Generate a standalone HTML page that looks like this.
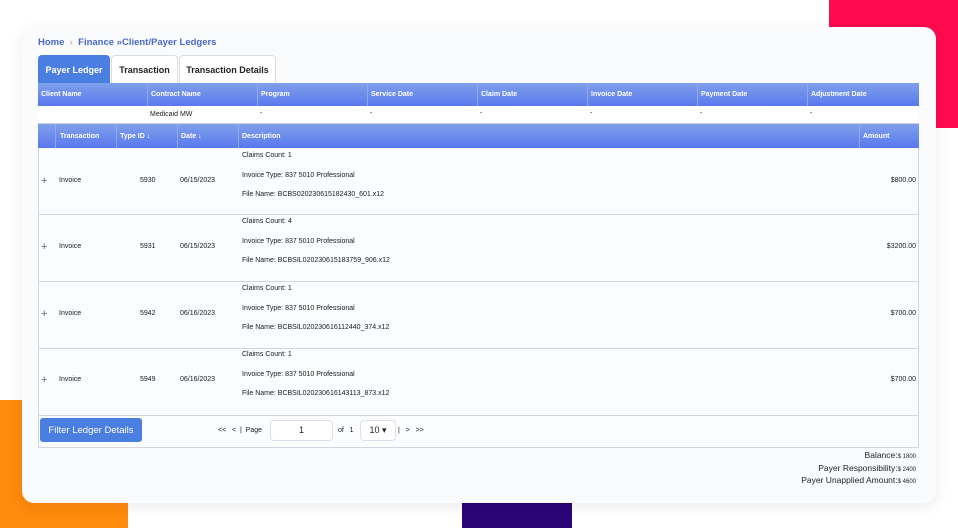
<!DOCTYPE html>
<html><head><style>
*{box-sizing:border-box;margin:0;padding:0}
body{width:958px;height:528px;background:#fff;position:relative;overflow:hidden;font-family:"Liberation Sans",sans-serif;color:#222}
.abs{position:absolute}
.card{left:22px;top:27px;width:914px;height:476px;background:#f9fbfd;border-radius:12px;box-shadow:0 4px 14px rgba(0,0,0,.08)}
.bc{left:38px;top:37px;font-size:9.5px;color:#4a68c8;font-weight:bold}
.tab{top:55px;height:28px;font-size:9px;font-weight:bold;display:flex;align-items:center;justify-content:center;border:1px solid #ddd;border-bottom:none;border-radius:4px 4px 0 0;background:#fff}
.hd{background:linear-gradient(#7fa0ea,#5a78ee);color:#fff;font-size:7px;font-weight:bold}
.hd div{position:absolute;top:0;height:100%;display:flex;align-items:center;padding-left:3px;border-left:1px solid #8fa8ee}
.t{font-size:7px;position:absolute;color:#1a1a1a}
.row{position:absolute;left:38px;width:881px;height:67px;border:1px solid #d3d6dc;border-top:none;background:#fafcfe}
</style></head><body>
<div class="abs" style="left:829px;top:0;width:129px;height:128px;background:#ff0a4f"></div>
<div class="abs" style="left:0;top:400px;width:128px;height:128px;background:#ff8a0c"></div>
<div class="abs" style="left:462px;top:500px;width:110px;height:28px;background:#2a0578"></div>
<div class="abs card"></div>
<div class="abs bc">Home <span style="color:#aaa;font-weight:normal">&nbsp;›&nbsp;</span> Finance »Client/Payer Ledgers</div>
<div class="abs tab" style="left:38px;width:72px;background:#4a7ee0;color:#fff;border-color:#4a7ee0">Payer Ledger</div>
<div class="abs tab" style="left:111px;width:67px">Transaction</div>
<div class="abs tab" style="left:179px;width:97px">Transaction Details</div>
<div class="abs hd" style="left:38px;top:83px;width:881px;height:23px">
<div style="left:0;border:none">Client Name</div><div style="left:109px">Contract Name</div><div style="left:219px">Program</div><div style="left:329px">Service Date</div><div style="left:439px">Claim Date</div><div style="left:549px">Invoice Date</div><div style="left:659px">Payment Date</div><div style="left:769px">Adjustment Date</div></div>
<div class="abs" style="left:38px;top:106px;width:881px;height:18px;background:#fff;border-bottom:1px solid #ccd">
<span class="t" style="left:112px;top:5px">Medicaid MW</span><span class="t" style="left:222px;top:4px">-</span><span class="t" style="left:332px;top:4px">-</span><span class="t" style="left:442px;top:4px">-</span><span class="t" style="left:552px;top:4px">-</span><span class="t" style="left:662px;top:4px">-</span><span class="t" style="left:772px;top:4px">-</span></div>
<div class="abs hd" style="left:38px;top:124px;width:881px;height:24px">
<div style="left:0;border:none"></div><div style="left:17px;padding-left:4px">Transaction</div><div style="left:78px">Type ID ↓</div><div style="left:139px">Date ↓</div><div style="left:200px">Description</div><div style="left:821px">Amount</div></div>
<div class="row" style="top:148px"><span class="t" style="left:2px;top:27px;font-size:11px;color:#666">+</span><span class="t" style="left:20px;top:29px">Invoice</span><span class="t" style="left:101px;top:29px">5930</span><span class="t" style="left:141px;top:29px">06/15/2023</span><span class="t" style="left:203px;top:4px">Claims Count: 1</span><span class="t" style="left:203px;top:24px">Invoice Type: 837 5010 Professional</span><span class="t" style="left:203px;top:43px">File Name: BCBS020230615182430_601.x12</span><span class="t" style="right:2px;top:29px">$800.00</span></div>
<div class="row" style="top:215px"><span class="t" style="left:2px;top:26px;font-size:11px;color:#666">+</span><span class="t" style="left:20px;top:28px">Invoice</span><span class="t" style="left:101px;top:28px">5931</span><span class="t" style="left:141px;top:28px">06/15/2023</span><span class="t" style="left:203px;top:3px">Claims Count: 4</span><span class="t" style="left:203px;top:23px">Invoice Type: 837 5010 Professional</span><span class="t" style="left:203px;top:42px">File Name: BCBSIL020230615183759_906.x12</span><span class="t" style="right:2px;top:28px">$3200.00</span></div>
<div class="row" style="top:282px"><span class="t" style="left:2px;top:26px;font-size:11px;color:#666">+</span><span class="t" style="left:20px;top:28px">Invoice</span><span class="t" style="left:101px;top:28px">5942</span><span class="t" style="left:141px;top:28px">06/16/2023</span><span class="t" style="left:203px;top:3px">Claims Count: 1</span><span class="t" style="left:203px;top:23px">Invoice Type: 837 5010 Professional</span><span class="t" style="left:203px;top:42px">File Name: BCBSIL020230616112440_374.x12</span><span class="t" style="right:2px;top:28px">$700.00</span></div>
<div class="row" style="top:349px"><span class="t" style="left:2px;top:25px;font-size:11px;color:#666">+</span><span class="t" style="left:20px;top:27px">Invoice</span><span class="t" style="left:101px;top:27px">5949</span><span class="t" style="left:141px;top:27px">06/16/2023</span><span class="t" style="left:203px;top:2px">Claims Count: 1</span><span class="t" style="left:203px;top:22px">Invoice Type: 837 5010 Professional</span><span class="t" style="left:203px;top:41px">File Name: BCBSIL020230616143113_873.x12</span><span class="t" style="right:2px;top:27px">$700.00</span></div>
<div class="abs" style="left:38px;top:416px;width:881px;height:32px;border:1px solid #d3d6dc;border-top:none;background:#fafcfe"></div>
<div class="abs" style="left:40px;top:418px;width:102px;height:24px;background:#4a7ee0;border-radius:3px;color:#fff;font-size:9.5px;display:flex;align-items:center;justify-content:center">Filter Ledger Details</div>
<span class="t" style="left:218px;top:427px">&lt;&lt; &nbsp; &lt; &nbsp;| &nbsp;Page</span>
<div class="abs" style="left:270px;top:420px;width:63px;height:21px;background:#fff;border:1px solid #dde;border-radius:4px;font-size:9px;text-align:center;line-height:19px">1</div>
<span class="t" style="left:338px;top:427px">of &nbsp; 1</span>
<div class="abs" style="left:360px;top:420px;width:36px;height:21px;background:#fff;border:1px solid #dde;border-radius:4px;font-size:9px;text-align:center;line-height:19px">10 ▾</div>
<span class="t" style="left:398px;top:427px">| &nbsp; &gt; &nbsp; &gt;&gt;</span>
<div class="abs" style="right:42px;top:449px;font-size:8.5px;text-align:right;color:#222">
<div style="height:12.5px;line-height:12.5px">Balance:<span style="font-size:6px">$ 1800</span></div>
<div style="height:12.5px;line-height:12.5px">Payer Responsibility:<span style="font-size:6px">$ 2400</span></div>
<div style="height:12.5px;line-height:12.5px">Payer Unapplied Amount:<span style="font-size:6px">$ 4600</span></div></div>
</body></html>
